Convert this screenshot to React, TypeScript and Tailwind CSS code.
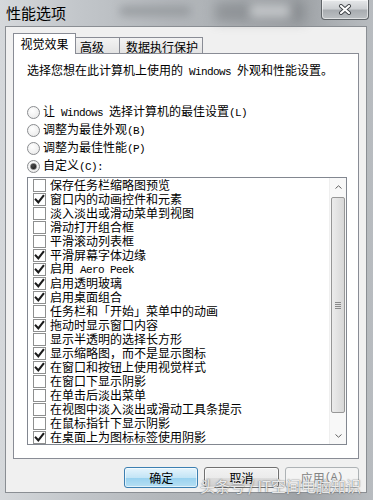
import React from "react";

function Mixed({ text }: { text: string }) {
  const parts = text.split(/([\x20-\x7e]+)/);
  return (
    <>
      {parts.map((p, i) =>
        p === "" ? null : /[\x20-\x7e]/.test(p) ? (
          <span
            key={i}
            className="font-['Liberation_Mono',monospace] text-[11px] tracking-[-0.6px] whitespace-pre"
          >
            {p}
          </span>
        ) : (
          <span key={i}>{p}</span>
        )
      )}
    </>
  );
}

function Radio({ checked, label }: { checked?: boolean; label: string }) {
  return (
    <div className="h-[18px] flex items-center gap-[3px]">
      <div className="w-[13px] h-[13px] rounded-full border border-[#8a8c8f] bg-[radial-gradient(circle_at_40%_35%,#ffffff,#e6e6e6)] flex items-center justify-center shrink-0">
        {checked && (
          <div className="w-[7px] h-[7px] rounded-full bg-[radial-gradient(circle_at_40%_35%,#4a4a4a,#111111)] border border-[#6e6e6e]" />
        )}
      </div>
      <div className="text-[12px] leading-[14px] text-black whitespace-nowrap">
        <Mixed text={label} />
      </div>
    </div>
  );
}

function Check({ checked, label }: { checked?: boolean; label: string }) {
  return (
    <div className="h-[14px] flex items-center gap-[4px] pl-[5px]">
      <div className="w-[13px] h-[13px] border border-[#8e8f8f] bg-white flex items-center justify-center shrink-0">
        {checked && (
          <svg width="11" height="11" viewBox="0 0 11 11">
            <path
              d="M1.8 5.6 L4.3 8.3 L9.3 1.9"
              fill="none"
              stroke="#1b1b1b"
              strokeWidth="2.1"
              strokeLinecap="square"
              strokeLinejoin="miter"
            />
          </svg>
        )}
      </div>
      <div className="text-[12px] leading-[14px] text-black whitespace-nowrap">
        <Mixed text={label} />
      </div>
    </div>
  );
}

const items: [string, boolean][] = [
  ["保存任务栏缩略图预览", false],
  ["窗口内的动画控件和元素", true],
  ["淡入淡出或滑动菜单到视图", false],
  ["滑动打开组合框", false],
  ["平滑滚动列表框", false],
  ["平滑屏幕字体边缘", true],
  ["启用 Aero Peek", true],
  ["启用透明玻璃", true],
  ["启用桌面组合", true],
  ["任务栏和「开始」菜单中的动画", false],
  ["拖动时显示窗口内容", true],
  ["显示半透明的选择长方形", false],
  ["显示缩略图，而不是显示图标", true],
  ["在窗口和按钮上使用视觉样式", true],
  ["在窗口下显示阴影", false],
  ["在单击后淡出菜单", false],
  ["在视图中淡入淡出或滑动工具条提示", false],
  ["在鼠标指针下显示阴影", false],
  ["在桌面上为图标标签使用阴影", true],
];

export default function App() {
  return (
    <div className="w-[373px] h-[500px] relative overflow-hidden flex flex-col font-['Noto_Sans_CJK_SC','Noto_Sans',sans-serif] bg-[linear-gradient(to_right,#d5d8db_0%,#c3c7cb_20%,#b2b6ba_45%,#aeb2b6_60%,#9fa3a7_80%,#b8bcc0_100%)]">
      {/* title bar */}
      <div className="h-[26px] relative flex items-start shrink-0">
        <div className="absolute left-[120px] top-[6px] w-[70px] h-[10px] bg-[#8e9296] blur-[4px] opacity-70" />
        <div className="absolute left-[215px] top-[2px] w-[90px] h-[20px] bg-[#7d8185] blur-[6px] opacity-60" />
        <div className="absolute left-[250px] top-[4px] w-[40px] h-[14px] bg-[#e4e6e8] blur-[5px] opacity-60" />
        <div className="relative pl-[6px] pt-[5px] text-[15px] leading-[16px] text-black">性能选项</div>
        <div className="relative ml-auto mr-[4px] w-[48px] h-[20px] rounded-b-[4px] border border-t-0 border-[#5f6468] bg-[linear-gradient(to_bottom,#e6e8ea_0%,#cdd0d3_45%,#a9adb1_55%,#bcc0c3_100%)] shadow-[inset_0_0_0_1px_rgba(255,255,255,0.55)] flex items-center justify-center">
          <svg width="14" height="11" viewBox="0 0 14 11">
            <path d="M3 2 L11 9 M11 2 L3 9" stroke="#3f4347" strokeWidth="4" strokeLinecap="round" />
            <path d="M3 2 L11 9 M11 2 L3 9" stroke="#ffffff" strokeWidth="2.2" strokeLinecap="round" />
          </svg>
        </div>
      </div>

      {/* client area */}
      <div className="ml-[5px] mr-[6px] mb-[7px] flex-1 border border-[#8a8e93] bg-[#f0f0f0] pl-[7px] pr-[7px] pt-[6px] flex flex-col">
        {/* tabs */}
        <div className="h-[20px] flex items-end shrink-0">
          <div className="relative z-10 -mb-px h-[21px] w-[63px] border border-b-0 border-[#898c95] bg-white text-[12px] leading-[14px] text-black flex items-center justify-center">
            视觉效果
          </div>
          <div className="h-[16px] w-[44px] border border-b-0 border-l-0 border-[#898c95] bg-[linear-gradient(to_bottom,#f3f3f3,#e3e3e3)] text-[12px] leading-[14px] text-black pl-[4px] pt-[2px]">
            高级
          </div>
          <div className="h-[16px] w-[83px] border border-b-0 border-l-0 border-[#898c95] bg-[linear-gradient(to_bottom,#f3f3f3,#e3e3e3)] text-[12px] leading-[14px] text-black pl-[6px] pt-[2px]">
            数据执行保护
          </div>
        </div>

        {/* panel */}
        <div className="h-[406px] border border-[#898c95] bg-white pl-[13px] pt-[9px] flex flex-col shrink-0">
          <div className="h-[14px] text-[12px] leading-[14px] text-black whitespace-nowrap">
            <Mixed text="选择您想在此计算机上使用的 Windows 外观和性能设置。" />
          </div>
          <div className="mt-[26px] flex flex-col">
            <Radio label="让 Windows 选择计算机的最佳设置(L)" />
            <Radio label="调整为最佳外观(B)" />
            <Radio label="调整为最佳性能(P)" />
            <Radio checked label="自定义(C):" />
          </div>
          <div className="mt-[2px] h-[268px] w-[320px] border border-[#828790] bg-white flex">
            <div className="flex-1 flex flex-col">
              {items.map(([t, c]) => (
                <Check key={t} label={t} checked={c} />
              ))}
            </div>
            <div className="w-[17px] bg-[#f8f8f8] border-l border-[#efefef] flex flex-col">
              <div className="h-[17px] flex items-center justify-center">
                <svg width="7" height="4" viewBox="0 0 7 4">
                  <path d="M0.5 3.5 L3.5 0.8 L6.5 3.5" fill="none" stroke="#606060" strokeWidth="1" />
                </svg>
              </div>
              <div className="mt-[2px] mx-[1px] h-[216px] rounded-[2px] border border-[#979797] bg-[linear-gradient(to_right,#ececec,#d8d8d8)] flex items-center justify-center">
                <div className="flex flex-col gap-[1px]">
                  <div className="w-[6px] h-px bg-[#8a8a8a]" />
                  <div className="w-[6px] h-px bg-[#8a8a8a]" />
                  <div className="w-[6px] h-px bg-[#8a8a8a]" />
                  <div className="w-[6px] h-px bg-[#8a8a8a]" />
                </div>
              </div>
              <div className="flex-1" />
              <div className="h-[17px] flex items-center justify-center">
                <svg width="7" height="4" viewBox="0 0 7 4">
                  <path d="M0.5 0.5 L3.5 3.2 L6.5 0.5" fill="none" stroke="#606060" strokeWidth="1" />
                </svg>
              </div>
            </div>
          </div>
        </div>

        {/* buttons */}
        <div className="mt-[8px] ml-[111px] flex gap-[6px]">
          <div className="w-[75px] h-[21px] rounded-[3px] border border-[#3c7fb1] bg-[linear-gradient(to_bottom,#e5f4fc_0%,#c4e5f6_50%,#98d1ef_51%,#b7dff3_100%)] shadow-[inset_0_0_0_1px_rgba(255,255,255,0.6)] flex items-center justify-center text-[12px] text-black">
            确定
          </div>
          <div className="w-[75px] h-[21px] rounded-[3px] border border-[#707070] bg-[linear-gradient(to_bottom,#f2f2f2_0%,#ebebeb_50%,#dddddd_51%,#cfcfcf_100%)] shadow-[inset_0_0_0_1px_rgba(255,255,255,0.7)] flex items-center justify-center text-[12px] text-black">
            取消
          </div>
          <div className="w-[75px] h-[21px] rounded-[3px] border border-[#adb2b5] bg-[#f4f4f4] flex items-center justify-center text-[12px] text-[#838383]">
            <Mixed text="应用(A)" />
          </div>
        </div>
      </div>

      {/* watermark */}
      <div className="absolute left-[200px] top-[477px] text-[15px] leading-[18px] text-white/85 whitespace-nowrap [text-shadow:0_0_1px_#666,0_0_2px_rgba(0,0,0,0.35)]">
        头条号 / IT空间电脑知识
      </div>
    </div>
  );
}
